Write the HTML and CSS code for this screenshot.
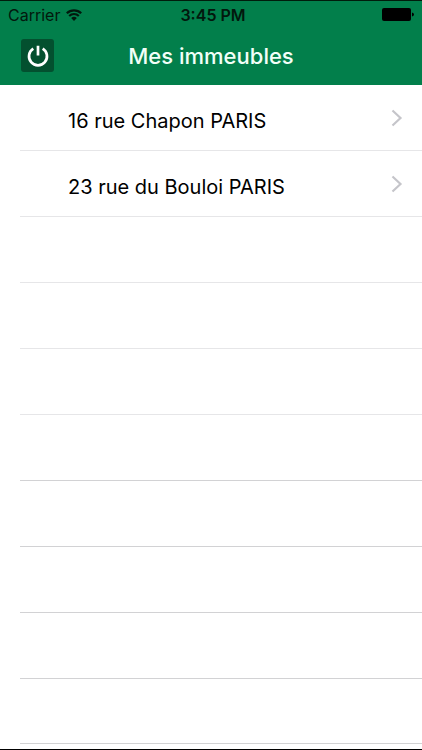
FILE: index.html
```html
<!DOCTYPE html>
<html lang="fr">
<head>
<meta charset="utf-8">
<meta name="viewport" content="width=device-width, initial-scale=1">
<title>Mes immeubles</title>
<link rel="stylesheet" href="styles.css">
</head>
<body>
<header class="header">
  <div class="status">
    <div class="carrier">
      <span>Carrier</span>
      <svg class="wifi" viewBox="0 0 16 12" aria-hidden="true">
        <path d="M.8 4.3a10.2 10.2 0 0 1 14.4 0M3.2 7a6.8 6.8 0 0 1 9.6 0" fill="none" stroke="currentColor" stroke-width="2.2"/>
        <path d="M5.2 9.1a4 4 0 0 1 5.6 0L8 12z" fill="currentColor"/>
      </svg>
    </div>
    <time class="clock">3:45 PM</time>
    <svg class="battery" viewBox="0 0 32 13" aria-hidden="true">
      <rect width="29" height="13" rx="2"/>
      <path d="M30 4.5q2 .5 2 2t-2 2z"/>
    </svg>
  </div>
  <div class="navbar">
    <button class="power" type="button" aria-label="Déconnexion">
      <svg viewBox="0 0 22 22" aria-hidden="true">
        <path d="M6.3 3.6a9 9 0 1 0 9.4 0M11 .8v9.6" fill="none" stroke="currentColor" stroke-width="2.7"/>
      </svg>
    </button>
    <h1 class="title">Mes immeubles</h1>
  </div>
</header>
<main>
  <ul class="list">
    <li class="row"><a class="link" href="#chapon"><span>16 rue Chapon PARIS</span><svg class="chevron" viewBox="0 0 12 18" aria-hidden="true"><path d="M1.5 1.5L9.5 9l-8 7.5"/></svg></a></li>
    <li class="row"><a class="link" href="#bouloi"><span>23 rue du Bouloi PARIS</span><svg class="chevron" viewBox="0 0 12 18" aria-hidden="true"><path d="M1.5 1.5L9.5 9l-8 7.5"/></svg></a></li>
    <li class="row"></li>
    <li class="row"></li>
    <li class="row"></li>
    <li class="row dark"></li>
    <li class="row dark"></li>
    <li class="row dark"></li>
    <li class="row dark"></li>
    <li class="row dark"></li>
  </ul>
</main>
</body>
</html>
```
FILE: styles.css
```css
* {
  box-sizing: border-box;
}

body {
  display: flex;
  flex-direction: column;
  min-height: 100vh;
  margin: 0;
  border-bottom: 1px solid #000;
  background: #fff;
  color: #000;
  font-family: Inter, "Liberation Sans", sans-serif;
}

main {
  flex: 1;
}

.header {
  padding-bottom: 8px;
  border-top: 1px solid #001c0c;
  background: #027f4b;
}

.status {
  display: grid;
  grid-template-columns: 1fr auto 1fr;
  align-items: center;
  height: 27px;
  padding: 0 8px;
  color: #02180d;
  font-size: 16px;
  line-height: 20px;
}

.carrier {
  display: flex;
  align-items: center;
  gap: 6px;
}

.wifi {
  width: 16px;
  height: 12px;
}

.clock {
  padding-left: 4px;
  font-weight: 600;
}

.battery {
  justify-self: end;
  width: 32px;
  height: 13px;
  fill: #000;
}

.navbar {
  display: grid;
  grid-template-columns: 33px 1fr 33px;
  align-items: center;
  height: 49px;
  padding: 6px 21px 0;
}

.power {
  display: grid;
  place-items: center;
  width: 33px;
  height: 33px;
  padding: 0;
  border: 0;
  border-radius: 3px;
  background: #03502f;
  color: #fff;
}

.power svg {
  width: 22px;
  height: 22px;
}

.title {
  margin: 0;
  color: #f2fff8;
  font-size: 22px;
  font-weight: 500;
  line-height: 28px;
  text-align: center;
}

.list {
  margin: 0;
  padding: 0 0 0 20px;
  list-style: none;
}

.row {
  height: 66px;
  border-bottom: 1px solid #e6e6e8;
}

.row.dark {
  border-bottom-color: #d2d2d4;
}

.row:last-child {
  height: 65px;
}

.link {
  display: flex;
  align-items: center;
  justify-content: space-between;
  height: 100%;
  padding: 0 19px 0 48px;
  color: #000;
  font-size: 20px;
  line-height: 28px;
  text-decoration: none;
}

.link span {
  padding-top: 6px;
}

.chevron {
  width: 12px;
  height: 18px;
  fill: none;
  stroke: #c5c5ca;
  stroke-width: 2.2;
}
```
